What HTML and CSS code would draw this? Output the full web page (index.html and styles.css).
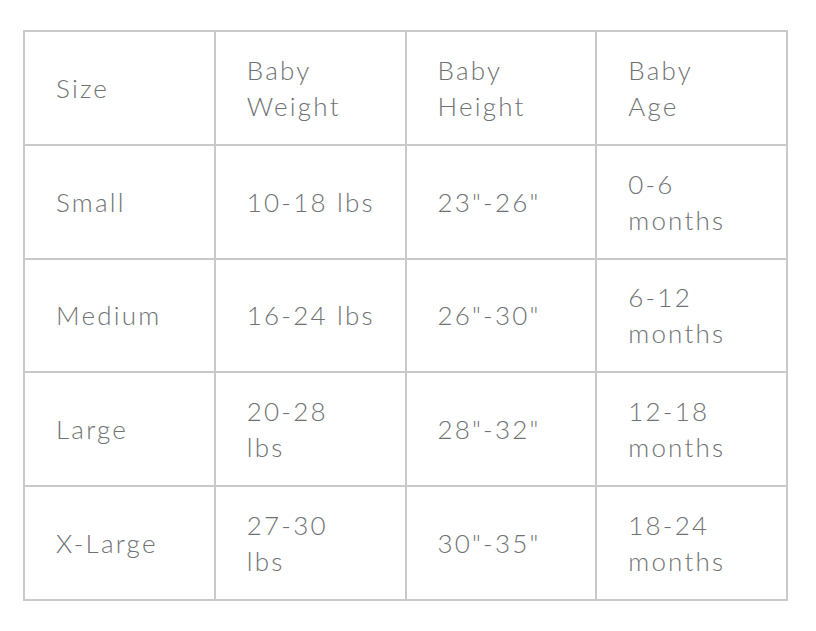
FILE: index.html
```html
<!DOCTYPE html>
<html>
<head>
<meta charset="utf-8">
<link rel="stylesheet" href="styles.css">
</head>
<body>
<table class="size-chart">
  <tr><td>Size</td><td>Baby<br>Weight</td><td>Baby<br>Height</td><td>Baby<br>Age</td></tr>
  <tr><td>Small</td><td>10-18 lbs</td><td>23"-26"</td><td>0-6<br>months</td></tr>
  <tr><td>Medium</td><td>16-24 lbs</td><td>26"-30"</td><td>6-12<br>months</td></tr>
  <tr><td>Large</td><td>20-28<br>lbs</td><td>28"-32"</td><td>12-18<br>months</td></tr>
  <tr><td>X-Large</td><td>27-30<br>lbs</td><td>30"-35"</td><td>18-24<br>months</td></tr>
</table>
</body>
</html>
```
FILE: styles.css
```css
html, body {
  margin: 0;
  padding: 0;
  background: #ffffff;
}
body {
  padding: 30px 0 0 23px;
}
.size-chart {
  border-collapse: collapse;
  width: 765px;
  height: 571px;
  table-layout: fixed;
  font-family: "Lato", "Liberation Sans", sans-serif;
  font-weight: 300;
  font-size: 26px;
  line-height: 36px;
  letter-spacing: 2.2px;
  color: #6f7273;
}
.size-chart td {
  border: 2px solid #c9c9c9;
  padding: 0 0 0 31px;
  vertical-align: middle;
  height: 110px;
}
```
